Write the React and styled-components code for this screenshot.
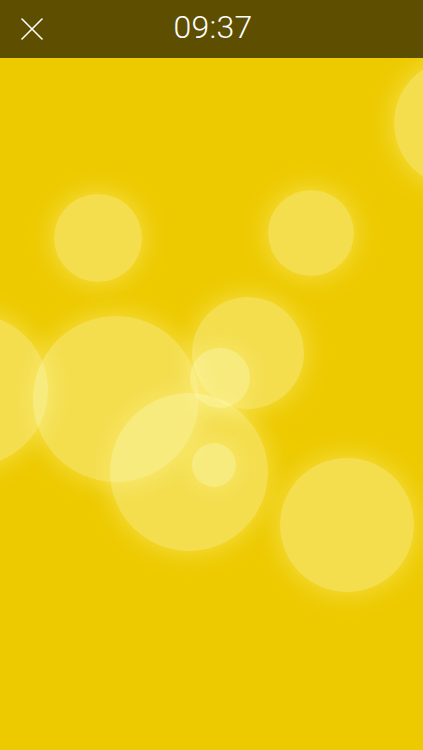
import styled, { createGlobalStyle } from 'styled-components';

const GlobalStyle = createGlobalStyle`
  html, body {
    margin: 0;
    padding: 0;
    height: 100%;
    overflow: hidden;
    background: #edca00;
  }
  #root {
    height: 100%;
  }
`;

const bubbles = [
  { x: 458, y: 123, r: 64 },
  { x: 98, y: 238, r: 44 },
  { x: 311, y: 233, r: 43 },
  { x: -28, y: 390, r: 76 },
  { x: 116, y: 399, r: 83 },
  { x: 248, y: 353, r: 56 },
  { x: 220, y: 378, r: 30 },
  { x: 189, y: 472, r: 79 },
  { x: 214, y: 465, r: 22 },
  { x: 347, y: 525, r: 67 },
];

const App = () => {
  return (
    <>
      <GlobalStyle />
      <Screen>
        <TopBar>
          <CloseButton aria-label="Close">
            <svg width="22" height="22" viewBox="0 0 22 22">
              <path d="M1 1 L21 21 M21 1 L1 21" stroke="#fff" strokeWidth="1.6" strokeLinecap="round" />
            </svg>
          </CloseButton>
          <Clock>09:37</Clock>
          <Spacer />
        </TopBar>
        <Canvas>
          {bubbles.map((b, i) => (
            <Bubble
              key={i}
              style={{ left: b.x - b.r, top: b.y - 58 - b.r, width: b.r * 2, height: b.r * 2 }}
            />
          ))}
        </Canvas>
      </Screen>
    </>
  );
};

export default App;

const Screen = styled.div`
  display: flex;
  flex-direction: column;
  height: 100vh;
  width: 100%;
  background: #edca00;
  font-family: Roboto, 'Liberation Sans', sans-serif;
`;

const TopBar = styled.div`
  flex: 0 0 58px;
  display: flex;
  align-items: center;
  justify-content: space-between;
  padding: 0 16px 0 21px;
  background: #5e4e00;
  position: relative;
  z-index: 2;
`;

const CloseButton = styled.button`
  width: 40px;
  display: flex;
  align-items: center;
  background: none;
  border: none;
  padding: 0;
  margin-top: -1px;
  cursor: pointer;
`;

const Clock = styled.div`
  color: #fff;
  font-size: 32px;
  font-weight: 300;
  letter-spacing: 0.3px;
  margin-top: -4px;
  margin-left: -2px;
`;

const Spacer = styled.div`
  width: 40px;
`;

const Canvas = styled.div`
  flex: 1;
  position: relative;
  overflow: hidden;
`;

const Bubble = styled.div`
  position: absolute;
  border-radius: 50%;
  background: rgba(255, 255, 200, 0.39);
  box-shadow: 0 0 22px 4px rgba(255, 240, 130, 0.45);
`;
